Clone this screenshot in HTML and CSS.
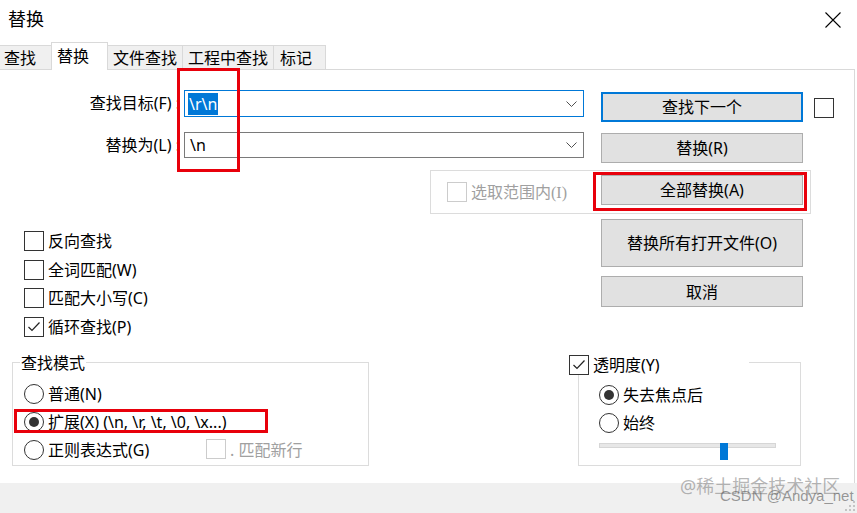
FILE: index.html
```html
<!DOCTYPE html>
<html lang="zh-CN">
<head>
<meta charset="utf-8">
<title>替换</title>
<link rel="stylesheet" href="styles.css">
</head>
<body>
<div class="dialog">
  <div class="titlebar">
    <span class="title">替换</span>
    <svg class="close" width="16" height="16" viewBox="0 0 16 16"><path d="M0.5 0.5 L15.5 15.5 M15.5 0.5 L0.5 15.5" stroke="#000" stroke-width="1.1" fill="none"/></svg>
  </div>
  <div class="tabs">
    <div class="tab tab-find">查找</div>
    <div class="tab tab-replace active">替换</div>
    <div class="tab tab-files">文件查找</div>
    <div class="tab tab-proj">工程中查找</div>
    <div class="tab tab-mark">标记</div>
  </div>
  <div class="panel">
    <div class="row row1">
      <div class="field-label">查找目标(F) :</div>
      <div class="combo focus">
        <span class="combo-text"><span class="sel">\r\n</span></span>
        <svg class="chev" width="11" height="6" viewBox="0 0 11 6"><polyline points="0.5,0.5 5.5,5.5 10.5,0.5" fill="none" stroke="#505050" stroke-width="1"/></svg>
      </div>
      <div class="btn default">查找下一个</div>
      <span class="box"></span>
    </div>
    <div class="row row2">
      <div class="field-label">替换为(L) :</div>
      <div class="combo">
        <span class="combo-text plain">\n</span>
        <svg class="chev" width="11" height="6" viewBox="0 0 11 6"><polyline points="0.5,0.5 5.5,5.5 10.5,0.5" fill="none" stroke="#505050" stroke-width="1"/></svg>
      </div>
      <div class="btn">替换(R)</div>
    </div>
    <div class="scope">
      <span class="box disabled"></span>
      <span class="dim">选取范围内<span class="serif">(I)</span></span>
      <div class="btn">全部替换(A)</div>
    </div>
    <div class="middle">
      <div class="opts">
        <div class="check-row"><span class="box"></span><span>反向查找</span></div>
        <div class="check-row"><span class="box"></span><span>全词匹配(W)</span></div>
        <div class="check-row"><span class="box"></span><span>匹配大小写(C)</span></div>
        <div class="check-row"><span class="box"><svg width="18" height="18" viewBox="0 0 18 18"><polyline points="3.5,9 7,12.5 14.5,4.5" fill="none" stroke="#222" stroke-width="1.2"/></svg></span><span>循环查找(P)</span></div>
      </div>
      <div class="actions">
        <div class="btn tall">替换所有打开文件(O)</div>
        <div class="btn cancel">取消</div>
      </div>
    </div>
    <div class="bottom">
      <div class="group mode">
        <div class="legend">查找模式</div>
        <div class="radio-row first"><span class="radio"></span><span>普通(N)</span></div>
        <div class="radio-row"><span class="radio on"></span><span>扩展(X) (\n, \r, \t, \0, \x...)</span></div>
        <div class="radio-row">
          <span class="radio-opt"><span class="radio"></span><span>正则表达式(G)</span></span>
          <span class="box disabled"></span>
          <span class="dim newline">. 匹配新行</span>
        </div>
      </div>
      <div class="group trans">
        <div class="trans-legend"><span class="box"><svg width="18" height="18" viewBox="0 0 18 18"><polyline points="3.5,9 7,12.5 14.5,4.5" fill="none" stroke="#222" stroke-width="1.2"/></svg></span><span>透明度(Y)</span></div>
        <div class="radio-row first"><span class="radio on"></span><span>失去焦点后</span></div>
        <div class="radio-row"><span class="radio"></span><span>始终</span></div>
        <div class="slider"><div class="track"></div><div class="thumb"></div></div>
      </div>
    </div>
  </div>
  <div class="footer"></div>

  <div class="anno anno-fields"></div>
  <div class="anno anno-all"></div>
  <div class="anno anno-mode"></div>

  <div class="wm wm1">@稀土掘金技术社区</div>
  <div class="wm wm2">CSDN @Andya_net</div>
  <svg class="grip" width="12" height="12" viewBox="0 0 12 12">
    <g fill="#c4c4c4">
      <rect x="9" y="1" width="2" height="2"/>
      <rect x="5" y="5" width="2" height="2"/><rect x="9" y="5" width="2" height="2"/>
      <rect x="1" y="9" width="2" height="2"/><rect x="5" y="9" width="2" height="2"/><rect x="9" y="9" width="2" height="2"/>
    </g>
  </svg>
</div>
</body>
</html>
```

FILE: styles.css
```css
html, body {
  margin: 0;
  padding: 0;
  background: #fff;
}

body {
  font-family: "Noto Sans", "Noto Sans CJK SC", sans-serif;
  font-size: 16px;
  color: #000;
}

.dialog {
  position: relative;
  width: 857px;
  height: 513px;
  overflow: hidden;
  background: #fff;
}

/* title bar */
.titlebar {
  display: flex;
  align-items: flex-start;
  height: 42px;
}
.title {
  font-size: 18px;
  line-height: 24px;
  padding: 7px 0 0 8px;
}
.close {
  margin: 12px 16px 0 auto;
}

/* tabs */
.tabs {
  display: flex;
  align-items: flex-end;
  height: 27px;
}
.tab {
  box-sizing: border-box;
  height: 24px;
  line-height: 20px;
  padding: 2px 0 0 5px;
  background: #f0f0f0;
  border-top: 1px solid #d9d9d9;
  border-right: 1px solid #d9d9d9;
  white-space: nowrap;
}
.tab.active {
  position: relative;
  z-index: 1;
  height: 28px;
  margin-bottom: -1px;
  margin-left: -1px;
  padding-top: 3px;
  background: #fff;
  border-left: 1px solid #d9d9d9;
}
.tab-find { width: 52px; padding-left: 4px; }
.tab-replace { width: 57px; }
.tab-files { width: 75px; }
.tab-proj { width: 91px; }
.tab-mark { width: 52px; padding-left: 6px; }

/* panel */
.panel {
  box-sizing: border-box;
  width: 855px;
  height: 414px;
  border-top: 1px solid #d9d9d9;
  border-right: 1px solid #d9d9d9;
}

.row {
  display: flex;
  align-items: flex-start;
}
.row1 { margin-top: 20px; }
.row2 { margin-top: 10px; }

.field-label {
  width: 180px;
  text-align: right;
  line-height: 27px;
  white-space: nowrap;
}
.row2 .field-label { line-height: 26px; }

.combo {
  box-sizing: border-box;
  margin-left: 4px;
  width: 400px;
  height: 27px;
  border: 1px solid #7a7a7a;
  display: flex;
  align-items: center;
  padding: 0 6px 0 3px;
}
.combo.focus { border-color: #0078d7; }
.row2 .combo { height: 26px; }
.combo-text {
  flex: 1;
  line-height: 20px;
}
.combo-text.plain { padding-left: 2px; }
.sel {
  background: #0078d7;
  color: #fff;
  padding: 0 1px;
}

.btn {
  box-sizing: border-box;
  width: 202px;
  height: 30px;
  border: 1px solid #adadad;
  background: #e1e1e1;
  display: flex;
  align-items: center;
  justify-content: center;
  line-height: 20px;
  white-space: nowrap;
}
.btn.default { border: 2px solid #0078d7; }
.row1 .btn { margin: 2px 0 0 17px; }
.row2 .btn { margin: 1px 0 0 17px; }
.row1 .box { margin: 8px 0 0 11px; }

/* checkbox & radio */
.box {
  box-sizing: border-box;
  flex: 0 0 auto;
  width: 20px;
  height: 20px;
  border: 1px solid #333;
  background: #fff;
  display: inline-block;
}
.box svg { display: block; }
.box.disabled { border-color: #cccccc; }

.radio {
  box-sizing: border-box;
  flex: 0 0 auto;
  width: 20px;
  height: 20px;
  border: 1px solid #333;
  border-radius: 50%;
  display: flex;
  align-items: center;
  justify-content: center;
}
.radio.on::after {
  content: "";
  width: 10px;
  height: 10px;
  border-radius: 50%;
  background: #333;
}

.dim { color: #a0a0a0; line-height: 20px; white-space: nowrap; }
.serif { font-family: "Liberation Serif", serif; }

/* scope group */
.scope {
  box-sizing: border-box;
  margin: 7px 0 0 430px;
  width: 381px;
  height: 44px;
  border: 1px solid #dcdcdc;
  display: flex;
  align-items: flex-start;
}
.scope .box { margin: 11px 0 0 16px; }
.scope .dim { margin: 11px 0 0 4px; }
.scope .btn { margin: 4px 7px 0 auto; }

/* middle area */
.middle {
  display: flex;
  height: 141px;
}
.opts {
  box-sizing: border-box;
  width: 601px;
  padding: 13px 0 0 24px;
}
.check-row {
  display: flex;
  align-items: center;
  gap: 4px;
  height: 28.5px;
  line-height: 20px;
}
.actions {
  display: flex;
  flex-direction: column;
  margin-top: 5px;
}
.btn.tall { height: 48px; }
.btn.cancel { height: 31px; margin-top: 9px; }

/* bottom groups */
.bottom {
  display: flex;
  align-items: flex-start;
  padding-top: 7px;
}
.group {
  box-sizing: border-box;
  height: 104px;
  border: 1px solid #dcdcdc;
}
.mode {
  margin-left: 12px;
  width: 357px;
}
.legend {
  width: max-content;
  margin: -10px 0 0 7px;
  padding: 0 1px;
  background: #fff;
  line-height: 20px;
}
.radio-row {
  display: flex;
  align-items: center;
  gap: 4px;
  height: 28px;
  line-height: 20px;
  padding-left: 11px;
  white-space: nowrap;
}
.mode .radio-row.first { margin-top: 7px; }
.radio-opt {
  display: flex;
  align-items: center;
  gap: 4px;
  width: 178px;
}
.radio-opt + .box { margin-top: -2px; }

.trans {
  margin-left: 209px;
  width: 223px;
}
.trans-legend {
  display: flex;
  align-items: center;
  gap: 4px;
  width: 180px;
  height: 20px;
  line-height: 20px;
  margin: -8px 0 0 -10px;
  background: #fff;
}
.trans .radio-row { padding-left: 20px; }
.trans .radio-row.first { margin-top: 6px; }

.slider {
  position: relative;
  margin: 1px 0 0 20px;
  width: 177px;
  height: 17px;
}
.track {
  box-sizing: border-box;
  margin-top: 6px;
  height: 5px;
  background: #e7e7e7;
  border: 1px solid #d6d6d6;
}
.thumb {
  position: absolute;
  left: 121px;
  top: 0;
  width: 8px;
  height: 17px;
  background: #0078d7;
}

/* footer */
.footer {
  height: 30px;
  background: #f0f0f0;
}

/* annotation overlays */
.anno {
  position: absolute;
  box-sizing: border-box;
  border: 3px solid #e8000b;
  z-index: 5;
}
.anno-fields { left: 177px; top: 68px; width: 63px; height: 104px; }
.anno-all { left: 593px; top: 172px; width: 214px; height: 39px; }
.anno-mode { left: 14px; top: 409px; width: 254px; height: 24px; }

/* watermark */
.wm {
  position: absolute;
  white-space: nowrap;
  z-index: 6;
}
.wm1 {
  left: 680px;
  top: 474px;
  font-size: 18px;
  line-height: 24px;
  color: rgba(120, 120, 120, 0.55);
}
.wm2 {
  left: 720px;
  top: 487px;
  font-family: "Liberation Sans", sans-serif;
  font-size: 15px;
  line-height: 18px;
  color: rgba(90, 90, 90, 0.6);
}
.grip {
  position: absolute;
  right: 1px;
  bottom: 1px;
}
```
